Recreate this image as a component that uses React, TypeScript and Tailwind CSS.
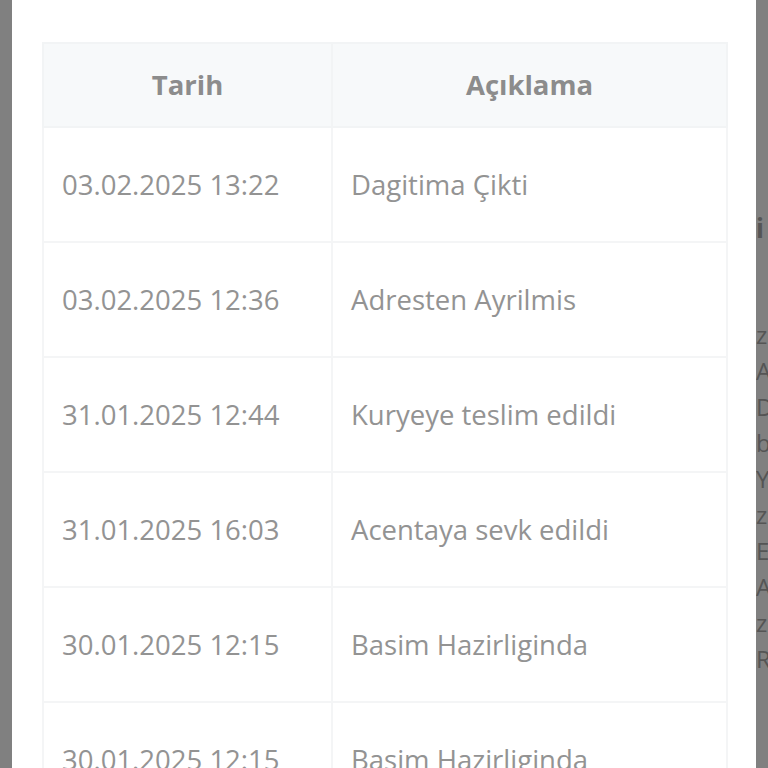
import * as React from 'react'

const rows = [
  { date: '03.02.2025 13:22', text: 'Dagitima Çikti' },
  { date: '03.02.2025 12:36', text: 'Adresten Ayrilmis' },
  { date: '31.01.2025 12:44', text: 'Kuryeye teslim edildi' },
  { date: '31.01.2025 16:03', text: 'Acentaya sevk edildi' },
  { date: '30.01.2025 12:15', text: 'Basim Hazirliginda' },
  { date: '30.01.2025 12:15', text: 'Basim Hazirliginda' },
]

// fragments of the page behind the overlay, clipped at the right edge
const behind = ['zo', 'AN', 'DI', 'bj', 'YI', 'zo', 'E', 'A', 'zo', 'R']

export default function App() {
  return (
    <div
      className="flex h-[768px] w-[768px] overflow-hidden bg-[#808080]"
      style={{ fontFamily: '"Open Sans", "Noto Sans", sans-serif' }}
    >
      <div className="w-3 shrink-0" />

      {/* Modal */}
      <div className="w-[744px] shrink-0 bg-white pl-[30px] pt-[42px]">
        <table className="w-[684px] table-fixed border-collapse">
          <colgroup>
            <col className="w-[289px]" />
            <col className="w-[395px]" />
          </colgroup>
          <thead>
            <tr className="h-[84px] bg-[#f7f9fa]">
              <th className="border-2 border-[#f2f4f5] text-center text-[27.5px] font-bold text-[#8c8c8c]">
                Tarih
              </th>
              <th className="border-2 border-[#f2f4f5] text-center text-[27.5px] font-bold text-[#8c8c8c]">
                Açıklama
              </th>
            </tr>
          </thead>
          <tbody>
            {rows.map((row, i) => (
              <tr key={i} className="h-[115px]">
                <td className="border-2 border-[#f4f5f6] px-[18px] text-[27.5px] text-[#939393]">
                  {row.date}
                </td>
                <td className="border-2 border-[#f4f5f6] px-[18px] text-[27.5px] text-[#939393]">
                  {row.text}
                </td>
              </tr>
            ))}
          </tbody>
        </table>
      </div>

      {/* Dimmed page behind */}
      <div className="w-3 shrink-0 overflow-hidden whitespace-nowrap text-[#555555]">
        <div className="pt-[210px] text-[26px] font-bold leading-[36px]">i</div>
        <div className="pt-[71px] text-[24px] leading-[36px]">
          {behind.map((t, i) => (
            <div key={i}>{t}</div>
          ))}
        </div>
      </div>
    </div>
  )
}
